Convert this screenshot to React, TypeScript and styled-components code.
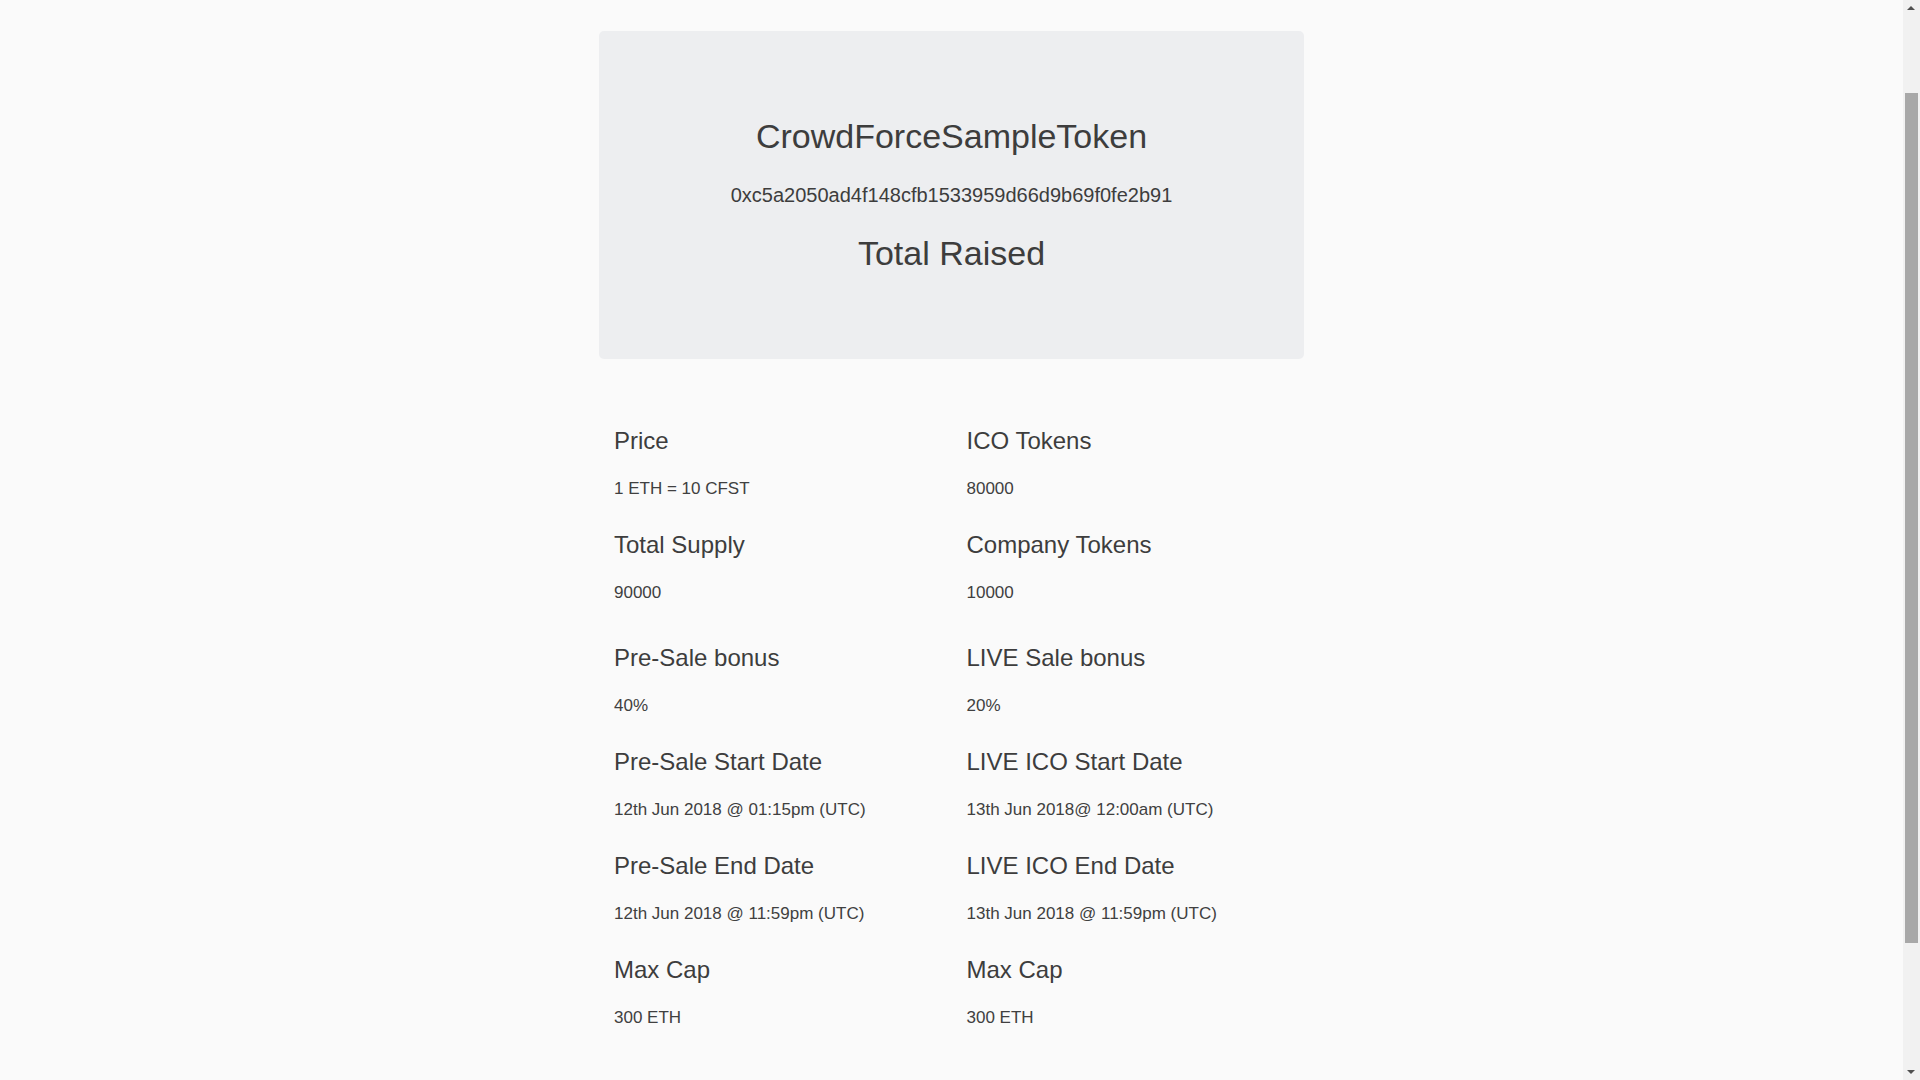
import React, { useLayoutEffect } from "react";
import styled, { createGlobalStyle } from "styled-components";

const GlobalStyle = createGlobalStyle`
  html {
    overflow-y: scroll;
  }
  body {
    margin: 0;
    background: #fafafa;
    color: #404040;
    font-family: "Liberation Sans", Arial, Helvetica, sans-serif;
  }
  * {
    box-sizing: border-box;
  }
`;

const Page = styled.div`
  padding: 128px 17px 173px 0;
`;

const Container = styled.main`
  width: 705px;
  margin: 0 auto;
`;

const Jumbotron = styled.section`
  background: #edeef0;
  border-radius: 5px;
  padding: 85px 32px;
  text-align: center;
`;

const Title = styled.h2`
  margin: 0;
  font-size: 34px;
  line-height: 41px;
  font-weight: 400;
  color: #3d3d3d;
`;

const Address = styled.p`
  margin: 23px 0;
  font-size: 20px;
  line-height: 30px;
  color: #3d3d3d;
`;

const DetailGrid = styled.div<{ $offset: number }>`
  display: grid;
  grid-template-columns: 1fr 1fr;
  margin-top: ${(p) => p.$offset}px;
`;

const Item = styled.div`
  padding: 0 15px 30px;
`;

const Label = styled.h4`
  margin: 0 0 21px;
  font-size: 24px;
  line-height: 28px;
  font-weight: 400;
  color: #3d3d3d;
`;

const Value = styled.p`
  margin: 0;
  font-size: 17px;
  line-height: 25px;
  color: #404040;
`;

const ScrollTrack = styled.div`
  position: fixed;
  top: 0;
  right: 0;
  bottom: 0;
  width: 17px;
  background: #f1f1f1;
`;

const ScrollThumb = styled.div`
  position: absolute;
  top: 93px;
  left: 2px;
  right: 2px;
  height: 850px;
  background: #a8a8a8;
`;

const ScrollArrow = styled.div<{ $dir: "up" | "down" }>`
  position: absolute;
  left: 4px;
  width: 0;
  height: 0;
  border-left: 4px solid transparent;
  border-right: 4px solid transparent;
  ${(p) =>
    p.$dir === "up"
      ? "top: 6px; border-bottom: 4px solid #505050;"
      : "bottom: 6px; border-top: 4px solid #505050;"}
`;

type Detail = { label: string; value: string };

const groupOne: Detail[] = [
  { label: "Price", value: "1 ETH = 10 CFST" },
  { label: "ICO Tokens", value: "80000" },
  { label: "Total Supply", value: "90000" },
  { label: "Company Tokens", value: "10000" },
];

const groupTwo: Detail[] = [
  { label: "Pre-Sale bonus", value: "40%" },
  { label: "LIVE Sale bonus", value: "20%" },
  { label: "Pre-Sale Start Date", value: "12th Jun 2018 @ 01:15pm (UTC)" },
  { label: "LIVE ICO Start Date", value: "13th Jun 2018@ 12:00am (UTC)" },
  { label: "Pre-Sale End Date", value: "12th Jun 2018 @ 11:59pm (UTC)" },
  { label: "LIVE ICO End Date", value: "13th Jun 2018 @ 11:59pm (UTC)" },
  { label: "Max Cap", value: "300 ETH" },
  { label: "Max Cap", value: "300 ETH" },
];

function Details({ items, offset }: { items: Detail[]; offset: number }) {
  return (
    <DetailGrid $offset={offset}>
      {items.map((d, i) => (
        <Item key={i}>
          <Label>{d.label}</Label>
          <Value>{d.value}</Value>
        </Item>
      ))}
    </DetailGrid>
  );
}

export default function App() {
  useLayoutEffect(() => {
    window.scrollTo(0, 97);
  }, []);

  return (
    <>
      <GlobalStyle />
      <Page>
        <Container>
          <Jumbotron>
            <Title>CrowdForceSampleToken</Title>
            <Address>0xc5a2050ad4f148cfb1533959d66d9b69f0fe2b91</Address>
            <Title>Total Raised</Title>
          </Jumbotron>
          <Details items={groupOne} offset={68} />
          <Details items={groupTwo} offset={9} />
        </Container>
      </Page>
      <ScrollTrack aria-hidden="true">
        <ScrollArrow $dir="up" />
        <ScrollThumb />
        <ScrollArrow $dir="down" />
      </ScrollTrack>
    </>
  );
}
